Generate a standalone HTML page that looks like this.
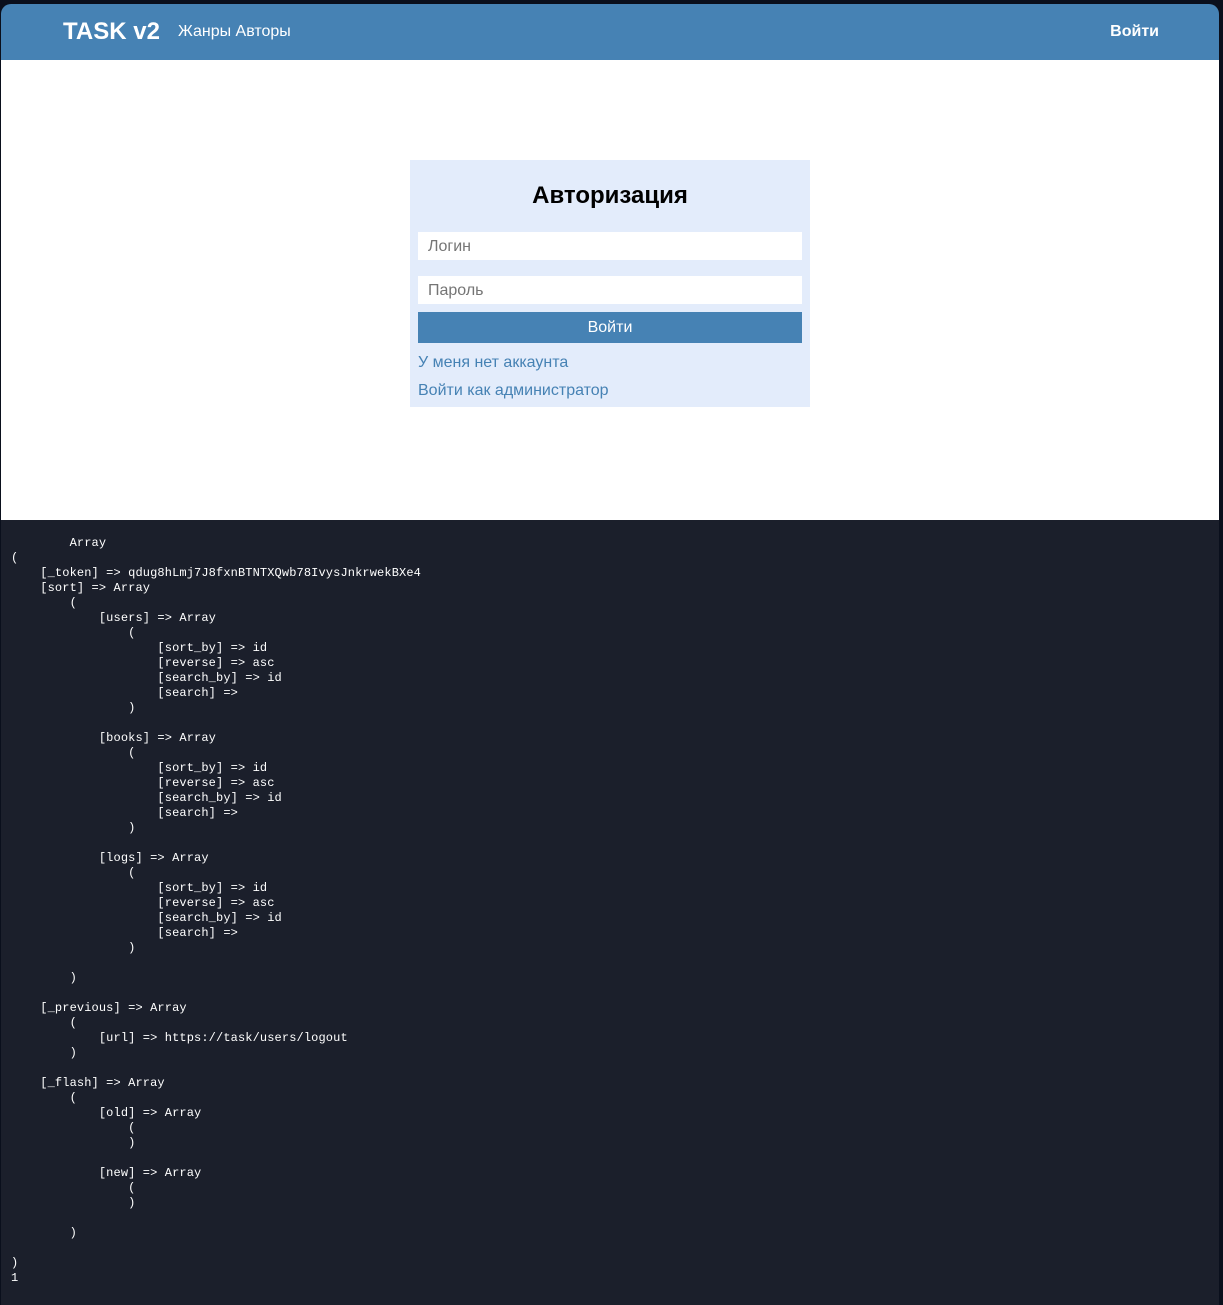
<!DOCTYPE html>
<html><head><meta charset="utf-8"><style>
html,body{margin:0;padding:0;background:#0a0f1c;width:1223px;height:1305px;overflow:hidden}
.wrap{position:absolute;left:1px;top:4px;width:1218px;height:1301px;background:#1b1f2b;border-radius:10px 10px 0 0;overflow:hidden}
.hdr{position:absolute;left:0;top:0;width:1218px;height:56px;background:#4682b4;font-family:"Liberation Sans",sans-serif;color:#fff}
.logo{position:absolute;left:62px;top:14px;font-size:24px;font-weight:bold}
.nav{position:absolute;left:177px;top:19px;font-size:16px}
.login{position:absolute;right:60px;top:19px;font-size:16px;font-weight:bold}
.main{position:absolute;left:0;top:56px;width:1218px;height:460px;background:#fff}
.card{position:absolute;left:409px;top:100px;width:400px;height:247px;background:#e3ecfb;font-family:"Liberation Sans",sans-serif}
.card h2{position:absolute;left:0;width:400px;top:22px;margin:0;text-align:center;font-size:24px;color:#000}
.inp{position:absolute;left:8px;width:374px;height:28px;background:#fff;color:#757575;font-size:16px;line-height:30px;padding-left:10px}
.btn{position:absolute;left:8px;top:152px;width:384px;height:31px;background:#4682b4;color:#fff;font-size:16px;line-height:31px;text-align:center}
.lnk{position:absolute;left:8px;color:#4682b4;font-size:16px}
pre{position:absolute;left:11px;top:536px;margin:0;font-family:"Liberation Mono",monospace;font-size:12px;letter-spacing:0.12px;line-height:15px;color:#fff}
</style></head><body>
<div class="wrap">
<div class="hdr"><div class="logo">TASK v2</div><div class="nav">Жанры Авторы</div><div class="login">Войти</div></div>
<div class="main">
<div class="card"><h2>Авторизация</h2>
<div class="inp" style="top:72px">Логин</div>
<div class="inp" style="top:116px">Пароль</div>
<div class="btn">Войти</div>
<div class="lnk" style="top:194px">У меня нет аккаунта</div>
<div class="lnk" style="top:222px">Войти как администратор</div>
</div></div>
</div>
<pre>        Array
(
    [_token] => qdug8hLmj7J8fxnBTNTXQwb78IvysJnkrwekBXe4
    [sort] => Array
        (
            [users] => Array
                (
                    [sort_by] => id
                    [reverse] => asc
                    [search_by] => id
                    [search] => 
                )

            [books] => Array
                (
                    [sort_by] => id
                    [reverse] => asc
                    [search_by] => id
                    [search] => 
                )

            [logs] => Array
                (
                    [sort_by] => id
                    [reverse] => asc
                    [search_by] => id
                    [search] => 
                )

        )

    [_previous] => Array
        (
            [url] => https://task/users/logout
        )

    [_flash] => Array
        (
            [old] => Array
                (
                )

            [new] => Array
                (
                )

        )

)
1</pre>
</body></html>
